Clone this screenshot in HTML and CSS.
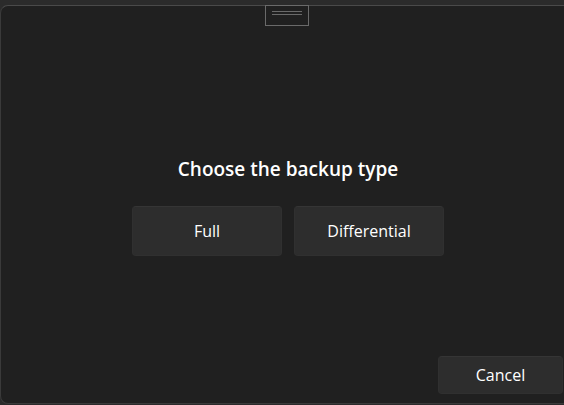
FILE: index.html
```html
<!DOCTYPE html>
<html>
<head>
<meta charset="utf-8">
<link rel="stylesheet" href="styles.css">
</head>
<body>
<div class="panel">
  <div class="grip"><span class="grip-line"></span><span class="grip-line"></span></div>
  <div class="main">
    <div class="title">Choose the backup type</div>
    <div class="choices">
      <button class="btn choice">Full</button>
      <button class="btn choice">Differential</button>
    </div>
  </div>
  <div class="footer">
    <button class="btn cancel">Cancel</button>
  </div>
</div>
</body>
</html>
```
FILE: styles.css
```css
html, body {
  margin: 0;
  padding: 0;
  width: 564px;
  height: 405px;
  overflow: hidden;
  background: #2b2b2b;
  font-family: "Open Sans", "Noto Sans", sans-serif;
}
.panel {
  position: relative;
  box-sizing: border-box;
  margin-top: 5px;
  height: 399px;
  background: #202020;
  border-top: 1px solid #4a4a4a;
  border-left: 1px solid #3a3a3a;
  border-bottom: 1px solid #3a3a3a;
  border-radius: 8px 0 0 8px;
  display: flex;
  flex-direction: column;
}
.grip {
  position: absolute;
  left: 264px;
  top: -1px;
  width: 42px;
  height: 14px;
  border: 1px solid #6a6a6a;
  display: flex;
  flex-direction: column;
  align-items: center;
  padding-top: 5px;
  gap: 1px;
  box-sizing: content-box;
}
.grip-line {
  display: block;
  width: 30px;
  height: 1px;
  border-top: 1px solid #6a6a6a;
}
.grip-line + .grip-line {
  height: 0;
}
.main {
  padding-top: 151px;
  padding-left: 12px;
  display: flex;
  flex-direction: column;
  align-items: center;
}
.title {
  color: #ffffff;
  font-size: 19px;
  font-weight: 600;
  line-height: 24px;
  margin-left: -1px;
}
.choices {
  margin-top: 25px;
  display: flex;
  gap: 12px;
  margin-left: -1px;
}
.btn {
  font-family: inherit;
  color: #ffffff;
  background: #2d2d2d;
  border: 1px solid #303030;
  border-top-color: #353535;
  border-radius: 4px;
  font-size: 16px;
  padding: 0;
  cursor: default;
}
.choice {
  width: 150px;
  height: 50px;
}
.footer {
  margin-top: auto;
  display: flex;
  justify-content: flex-end;
  padding-right: 1px;
  padding-bottom: 9px;
}
.cancel {
  width: 125px;
  height: 38px;
}
```
